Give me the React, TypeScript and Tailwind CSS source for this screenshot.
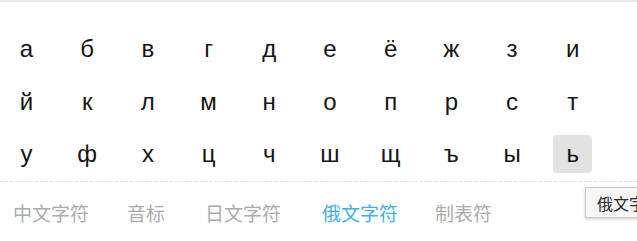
import React from "react";

const rows = [
  ["а", "б", "в", "г", "д", "е", "ё", "ж", "з", "и"],
  ["й", "к", "л", "м", "н", "о", "п", "р", "с", "т"],
  ["у", "ф", "х", "ц", "ч", "ш", "щ", "ъ", "ы", "ь"],
];

const tabs = [
  { label: "中文字符", cls: "" },
  { label: "音标", cls: "ml-[38px]" },
  { label: "日文字符", cls: "ml-[40px]" },
  { label: "俄文字符", cls: "ml-[41px]", active: true },
  { label: "制表符", cls: "ml-[37px]" },
];

export default function App() {
  return (
    <div className="relative w-[637px] h-[241px] overflow-hidden bg-white border-t-2 border-[#e6e6e6]">
      <div className="flex flex-col gap-[14.5px] pt-[28px] pl-[7px]">
        {rows.map((row, ri) => (
          <div key={ri} className="flex gap-[21.7px]">
            {row.map((ch, ci) => {
              const hl = ri === 2 && ci === 9;
              return (
                <div
                  key={ci}
                  className={`w-[39px] h-[38px] flex items-center justify-center rounded-[4px] text-[24px] leading-none text-[#151515] ${
                    hl ? "bg-[#e2e2e2]" : ""
                  }`}
                  style={{ fontFamily: '"Liberation Sans", Arial, sans-serif' }}
                >
                  {ch}
                </div>
              );
            })}
          </div>
        ))}
      </div>
      <div className="mt-[8px] border-t border-dashed border-[#dcdcdc]" />
      <div
        className="flex items-center pl-[13px] h-[64px] -mt-[1px] pb-[1px] text-[19px] leading-none"
        style={{ fontFamily: '"Noto Sans CJK SC", sans-serif' }}
      >
        {tabs.map((t) => (
          <span
            key={t.label}
            className={`${t.cls} ${t.active ? "text-[#3fb0df]" : "text-[#ababab]"}`}
          >
            {t.label}
          </span>
        ))}
      </div>
      <div
        className="absolute left-[585px] top-[185px] h-[31px] w-[90px] flex items-center pl-[11px] bg-[#f6f6f6] border border-[#c9c9c9] shadow-[0_1px_3px_rgba(0,0,0,0.2)] text-[16px] text-[#2a2a2a] leading-none whitespace-nowrap"
        style={{ fontFamily: '"Noto Sans CJK SC", sans-serif' }}
      >
        俄文字符
      </div>
    </div>
  );
}
